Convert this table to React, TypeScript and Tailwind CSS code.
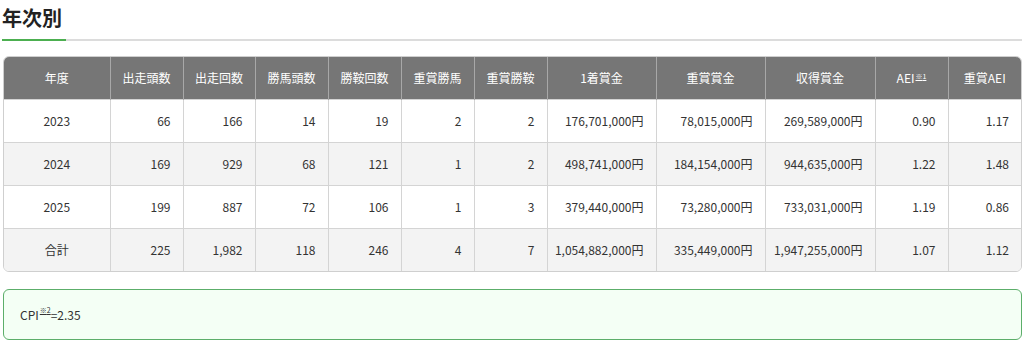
import React from "react";

const headers = [
  "年度",
  "出走頭数",
  "出走回数",
  "勝馬頭数",
  "勝鞍回数",
  "重賞勝馬",
  "重賞勝鞍",
  "1着賞金",
  "重賞賞金",
  "収得賞金",
  "AEI",
  "重賞AEI",
];

const widths = [106, 73, 72, 73, 73, 73, 73, 109, 109, 110, 73, 73];

const rows = [
  ["2023", "66", "166", "14", "19", "2", "2", "176,701,000円", "78,015,000円", "269,589,000円", "0.90", "1.17"],
  ["2024", "169", "929", "68", "121", "1", "2", "498,741,000円", "184,154,000円", "944,635,000円", "1.22", "1.48"],
  ["2025", "199", "887", "72", "106", "1", "3", "379,440,000円", "73,280,000円", "733,031,000円", "1.19", "0.86"],
  ["合計", "225", "1,982", "118", "246", "4", "7", "1,054,882,000円", "335,449,000円", "1,947,255,000円", "1.07", "1.12"],
];

// 注釈リンク (※1, ※2)
const Note = ({ n }: { n: number }) => (
  <span className="relative -top-[4px] ml-[1px] text-[7px] leading-none underline">※{n}</span>
);

const App = () => {
  return (
    <div
      className="w-[1024px] h-[341px] bg-white px-[2px] text-[#333]"
      style={{ fontFamily: '"Noto Sans CJK JP", "Noto Sans", sans-serif' }}
    >
      <h2 className="pt-[3px] text-[20px] font-bold leading-[30px] text-[#222]">年次別</h2>
      <div className="mt-[6px] flex h-[2px] w-[1020px]">
        <div className="w-[64px] bg-[#4caf50]" />
        <div className="flex-1 bg-[#dcdcdc]" />
      </div>

      <div className="ml-[1px] mt-[15px] w-[1019px] overflow-hidden rounded-md border border-[#cfcfcf]">
        <table className="w-full border-collapse table-fixed text-[12px]">
          <colgroup>
            {widths.map((w, i) => (
              <col key={i} style={{ width: w }} />
            ))}
          </colgroup>
          <thead>
            <tr className="h-[42px] bg-[#767676] text-white">
              {headers.map((h, i) => (
                <th
                  key={h}
                  className="border-l border-[#a8a8a8] font-normal first:border-l-0"
                >
                  {h}
                  {i === 10 && <Note n={1} />}
                </th>
              ))}
            </tr>
          </thead>
          <tbody>
            {rows.map((r, ri) => (
              <tr
                key={ri}
                className={`h-[43px] border-t border-[#d4d4d4] ${ri % 2 === 1 ? "bg-[#f3f3f3]" : "bg-white"}`}
              >
                {r.map((c, ci) => (
                  <td
                    key={ci}
                    className={`border-l border-[#d4d4d4] first:border-l-0 ${ci === 0 ? "text-center" : "pr-[12px] text-right"}`}
                  >
                    {c}
                  </td>
                ))}
              </tr>
            ))}
          </tbody>
        </table>
      </div>

      <div className="ml-[1px] mt-[17px] flex h-[51px] w-[1019px] items-center rounded-md border border-[#5cae6a] bg-[#f4fff5] pl-[16px] text-[12px]">
        CPI
        <Note n={2} />
        =2.35
      </div>
    </div>
  );
};

export default App;
